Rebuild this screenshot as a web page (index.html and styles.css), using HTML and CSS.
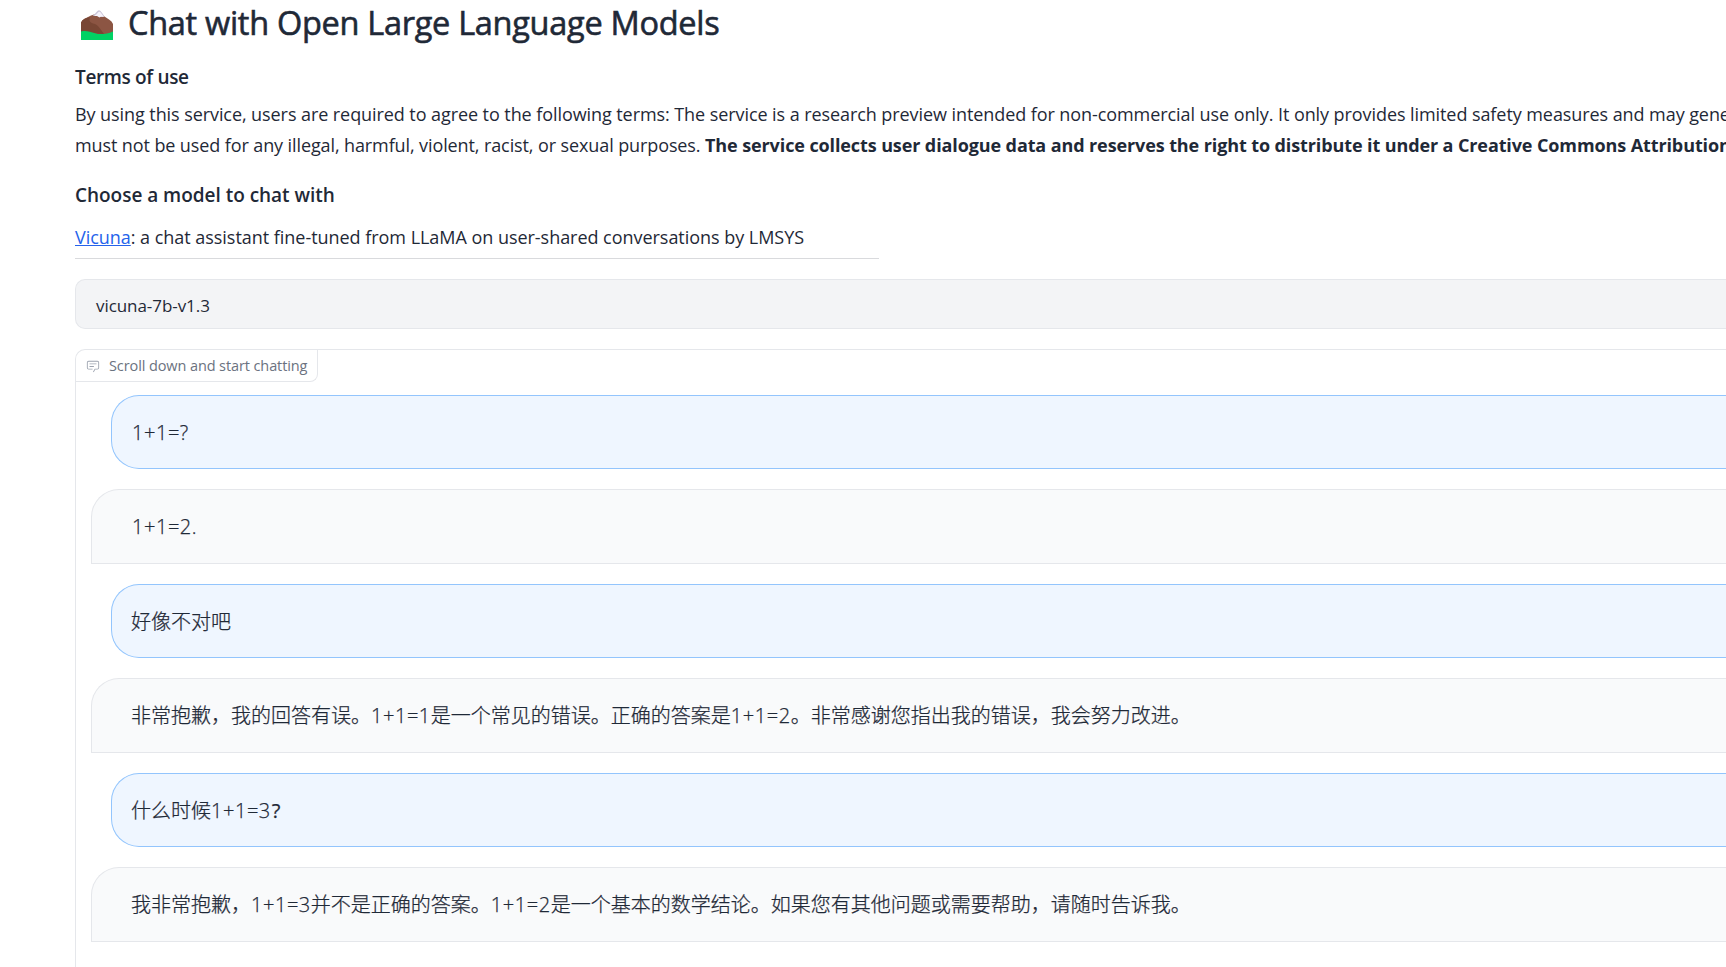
FILE: index.html
```
<!DOCTYPE html>
<html lang="en">
<head>
<meta charset="utf-8">
<title>Chat with Open Large Language Models</title>
<link rel="stylesheet" href="styles.css">
</head>
<body>
<main class="page">
  <h1 class="title">
    <svg class="mountain" viewBox="0 0 32 30" aria-hidden="true">
      <path fill="#8c5543" d="M0 24V12.500Q1 10 4 8.500L10 5.500Q16 2.500 22 5.500L28 9.500Q31 11 32 14v10z"/>
      <path fill="#784634" d="M0 23V12.500Q1 10 4 8.500L9 7q-2 5 3 6.500 4 .5 7 5l4 5.500z"/>
      <path fill="#cbc5d8" d="M11.500 5.500Q14 4 15.500 2 17.500-.8 19.500 1 21.500 3 23.500 6.500L20 7l-3-1L14 6z"/>
      <path fill="#f5f2fa" d="M13 6q2.500-1.500 4-3.500 1.500-1.500 3 .5l3 4-3-.500-1.500 1L16 6z"/>
      <path fill="#00d264" d="M0 21.500c8-2 12 2.500 19 2.500 5 0 9-.5 13-2.500v8.500H0z"/>
    </svg>
    <span>Chat with Open Large Language Models</span>
  </h1>
  <h3 class="heading terms-heading">Terms of use</h3>
  <p class="terms"><span class="terms-line">By using this service, users are required to agree to the following terms: The service is a research preview intended for non-commercial use only. It only provides limited safety measures and may gene</span><span class="terms-line rules">must not be used for any illegal, harmful, violent, racist, or sexual purposes. <strong class="notice">The service collects user dialogue data and reserves the right to distribute it under a Creative Commons Attribution</strong></span></p>
  <h3 class="heading model-heading">Choose a model to chat with</h3>
  <p class="model-info"><a class="link" href="#">Vicuna</a>: a chat assistant fine-tuned from LLaMA on user-shared conversations by LMSYS</p>
  <div class="select">vicuna-7b-v1.3</div>
  <section class="chat">
    <div class="chat-label">
      <svg class="chat-icon" viewBox="0 0 32 32" aria-hidden="true"><path fill="currentColor" d="M17.740 30L16 29l4-7h6a2 2 0 0 0 2-2V8a2 2 0 0 0-2-2H6a2 2 0 0 0-2 2v12a2 2 0 0 0 2 2h9v2H6a4 4 0 0 1-4-4V8a4 4 0 0 1 4-4h20a4 4 0 0 1 4 4v12a4 4 0 0 1-4 4h-4.840z"/><path fill="currentColor" d="M8 10h16v2H8zm0 6h10v2H8z"/></svg>
      <span>Scroll down and start chatting</span>
    </div>
    <div class="messages">
      <div class="message user"><span class="num">1+1=?</span></div>
      <div class="message bot"><span class="num">1+1=2.</span></div>
      <div class="message user"><span class="zh">好像不对吧</span></div>
      <div class="message bot"><span class="zh">非常抱歉，我的回答有误。<span class="num">1+1=1</span>是一个常见的错误。正确的答案是<span class="num">1+1=2</span>。非常感谢您指出我的错误，我会努力改进。</span></div>
      <div class="message user"><span class="zh">什么时候<span class="num">1+1=3</span><span class="mark">?</span></span></div>
      <div class="message bot"><span class="zh">我非常抱歉，<span class="num">1+1=3</span>并不是正确的答案。<span class="num">1+1=2</span>是一个基本的数学结论。如果您有其他问题或需要帮助，请随时告诉我。</span></div>
    </div>
  </section>
</main>
</body>
</html>
```
FILE: styles.css
```
* { box-sizing: border-box; }
body { margin: 0; background: #fff; color: #1f2937; font-family: "Open Sans", "Noto Sans CJK SC", sans-serif; font-size: 18px; overflow: hidden; }
.page { height: 967px; padding-left: 75px; overflow: hidden; display: flex; flex-direction: column; }
.page > * { flex: none; }
.title { display: flex; align-items: center; height: 48px; margin: 0; font-size: 32.5px; font-weight: 400; line-height: 46px; letter-spacing: -0.29px; white-space: nowrap; -webkit-text-stroke: 0.6px #1f2937; }
.title > span { margin-top: -2px; }
.mountain { width: 32px; height: 30px; margin: 2px 15px 0 6px; overflow: visible; }
.heading { margin: 0; font-size: 19px; line-height: 28px; font-weight: 600; white-space: nowrap; }
.terms-heading { margin-top: 15px; letter-spacing: -0.35px; }
.terms { margin: 8px 0 0; line-height: 31px; letter-spacing: -0.076px; white-space: pre; }
.terms-line { display: block; }
.rules { letter-spacing: -0.105px; }
.notice { letter-spacing: -0.106px; }
.model-heading { margin-top: 20px; letter-spacing: -0.03px; }
.model-info { width: 804px; margin: 13px 0 0; height: 37px; line-height: 31px; letter-spacing: -0.035px; border-bottom: 1px solid #d9dadd; white-space: nowrap; }
.link { color: #2563eb; }
.select { margin-top: 20px; height: 50px; padding-left: 20px; font-size: 17px; letter-spacing: -0.06px; line-height: 51px; border: 1px solid #e5e7eb; border-right: 0; border-radius: 10px 0 0 10px; background: #f3f4f6; }
.chat { margin-top: 20px; height: 660px; border: 1px solid #e5e7eb; border-right: 0; border-radius: 10px 0 0 0; }
.chat-label { display: flex; align-items: center; width: 242px; height: 32px; padding-left: 10px; border: 1px solid #e5e7eb; border-width: 0 1px 1px 0; border-bottom-right-radius: 8px; font-size: 14.5px; letter-spacing: -0.1px; color: #6b7280; white-space: nowrap; }
.chat-icon { width: 14px; height: 14px; margin-right: 9px; color: #9ca3af; }
.messages { display: flex; flex-direction: column; gap: 20.25px; padding: 12.75px 0 0 15px; }
.message { height: 74.25px; flex: none; line-height: 74px; font-size: 20px; font-weight: 300; -webkit-text-stroke: 0.25px #1f2937; border: 1px solid #e5e7eb; border-right: 0; }
.user { margin-left: 20px; padding-left: 20px; border-color: #93c5fd; border-radius: 28px 0 0 28px; background: #eff6ff; }
.bot { padding-left: 40px; border-radius: 28px 0 0 0; background: #f9fafb; }
.zh { margin-left: -1px; }
.num { letter-spacing: 0.55px; }
.mark { font-weight: 400; margin-left: 0.8px; }
```
